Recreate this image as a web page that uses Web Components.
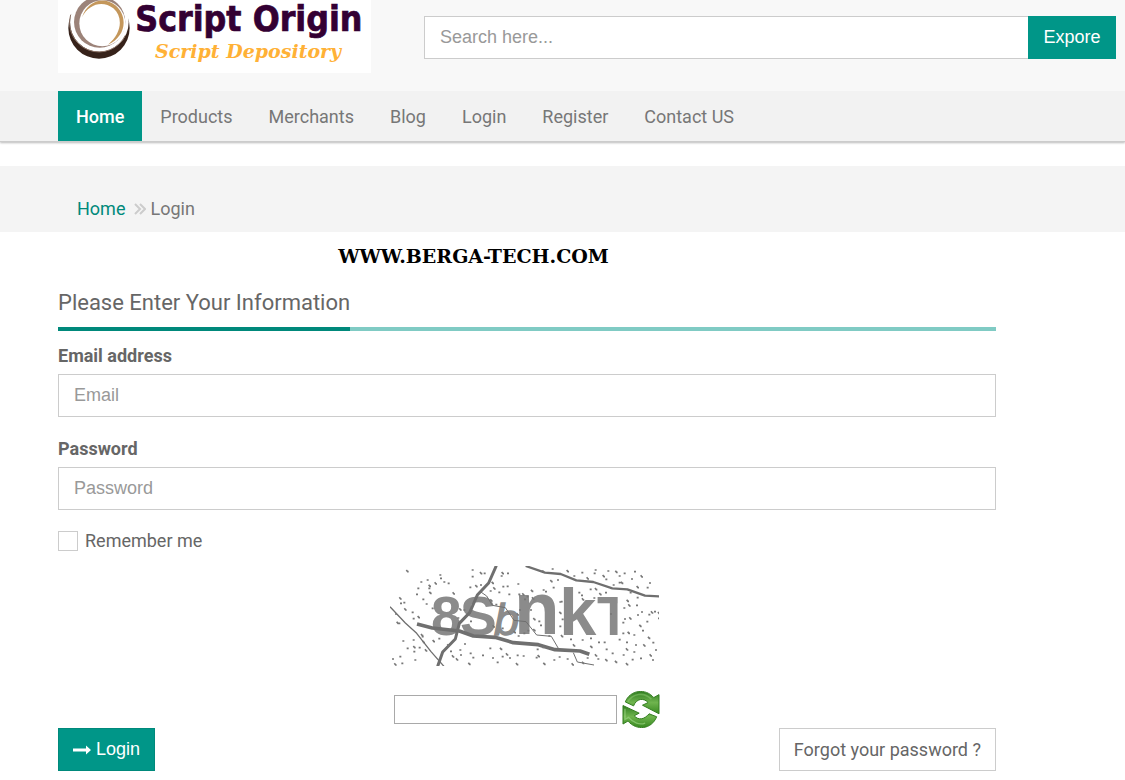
<!DOCTYPE html>
<html lang="en">
<head>
<meta charset="utf-8">
<meta name="viewport" content="width=device-width, initial-scale=1">
<title>Login - Script Origin</title>
<style>
  :root { --brand: #009688; --brand-dark: #00897b; --line: #ccc; --ui: "Liberation Sans", Arial, sans-serif; }
  body { margin: 0; background: #fff; color: #666; font: 18px/22px Roboto, sans-serif; }
</style>
</head>
<body>
<login-page></login-page>

<script>
const define = (name, html, setup) => {
  const template = document.createElement('template');
  template.innerHTML = '<style>*{box-sizing:border-box}</style>' + html;
  customElements.define(name, class extends HTMLElement {
    constructor() {
      super();
      this.attachShadow({ mode: 'open' }).append(template.content.cloneNode(true));
    }
    connectedCallback() { if (setup) setup(this, this.shadowRoot); }
  });
};

define('site-logo', `
<style>
  :host { display: block; width: 313px; height: 73px; background: #fff; }
  a, svg { display: block; }
</style>
<a href="#" aria-label="Script Origin home">
<svg width="313" height="73" viewBox="24 0 939 219">
  <circle cx="147" cy="84" r="92" fill="#36221a"/>
  <circle cx="148" cy="67" r="88" fill="#fff"/>
  <path d="M62 44 A88 88 0 0 0 226 106" fill="none" stroke="#8d7467" stroke-width="3"/>
  <circle cx="149" cy="66" r="77" fill="#9c8379"/>
  <circle cx="157" cy="70" r="69" fill="#fff"/>
  <path d="M96 52 C112 2 162 -12 196 16 C234 48 230 108 174 134 C216 98 220 52 190 25 C158 0 116 12 96 52Z" fill="#c4975b"/>
  <text x="256" y="93" font-family="DejaVu Sans Condensed, DejaVu Sans, sans-serif" font-stretch="condensed" font-weight="700" font-size="106" fill="#330033" stroke="#330033" stroke-width="2">Script Origin</text>
  <text x="315" y="173" font-family="DejaVu Serif, serif" font-style="italic" font-weight="700" font-size="57" fill="#ffb136">Script Depository</text>
</svg>
</a>`);

define('site-search', `
<style>
  :host { display: block; flex: 1; }
  form { display: flex; }
  input { flex: 1; min-width: 0; height: 43px; padding: 0 15px; border: 1px solid var(--line); border-right: 0; border-radius: 0; background: #fff; color: #555; font: 18px var(--ui); }
  input::placeholder { color: #999; }
  button { width: 88px; height: 43px; padding: 0; border: 0; background: var(--brand); color: #fff; font: 18px var(--ui); }
</style>
<form><input type="text" aria-label="Search" placeholder="Search here..."><button type="button">Expore</button></form>`);

define('site-header', `
<style>
  :host { display: flex; align-items: flex-start; height: 91px; padding: 0 9px 0 58px; gap: 53px; background: #f8f8f8; }
  site-search { margin-top: 16px; }
</style>
<site-logo></site-logo><site-search></site-search>`);

define('nav-link', `
<style>
  :host { display: block; }
  a { display: block; padding: 15px 18px 13px; color: #777; text-decoration: none; white-space: nowrap; }
  :host([active]) a { background: var(--brand); color: #fff; font-weight: 500; }
</style>
<a href="#"><slot></slot></a>`);

define('site-nav', `
<style>
  :host { display: block; background: #f2f2f2; box-shadow: 0 1px 0 #ccc, 0 2px 2px #bbb; }
  nav { display: flex; padding-left: 58px; height: 50px; }
</style>
<nav><slot></slot></nav>`);

define('bread-crumbs', `
<style>
  :host { display: block; margin-top: 25px; background: #f4f4f4; }
  nav { display: flex; align-items: center; padding: 32px 77px 12px; color: #777; }
  a { color: var(--brand-dark); text-decoration: none; }
  svg { margin: 0 4px 0 9px; }
</style>
<nav aria-label="Breadcrumb"><a href="#">Home</a>
<svg width="12" height="12" viewBox="0 0 12 12" fill="none" stroke="#ccc" stroke-width="2"><path d="M1 1l5 5-5 5M6 1l5 5-5 5"/></svg>
<span><slot></slot></span></nav>`);

define('section-title', `
<style>
  :host { display: block; border-bottom: 4px solid #80cbc4; }
  h1 { width: fit-content; margin: 0 0 -4px; padding-bottom: 8px; border-bottom: 4px solid var(--brand-dark); font-size: 22px; line-height: 32px; font-weight: 400; }
</style>
<h1><slot></slot></h1>`);

define('form-field', `
<style>
  :host { display: block; }
  label { display: block; margin-bottom: 7px; font-weight: 700; }
  input { display: block; width: 100%; height: 43px; padding: 0 15px; border: 1px solid var(--line); border-radius: 0; background: #fff; color: #555; font: 18px var(--ui); }
  input::placeholder { color: #999; }
</style>
<label for="control"><slot></slot></label><input id="control">`,
(host, root) => {
  const input = root.querySelector('input');
  input.type = host.getAttribute('type');
  input.placeholder = host.getAttribute('placeholder');
});

define('check-option', `
<style>
  :host { display: block; }
  label { display: flex; align-items: center; gap: 7px; }
  input { appearance: none; width: 20px; height: 20px; margin: 0; border: 1px solid var(--line); background: #fff; }
  input:checked { background: var(--brand); }
</style>
<label><input type="checkbox"><slot></slot></label>`);

define('captcha-box', `
<style>
  :host { display: flex; flex-direction: column; align-items: center; }
  .image { display: block; margin-right: 5px; }
  .entry { display: flex; align-items: center; gap: 5px; margin-top: 24px; }
  input { width: 223px; height: 29px; padding: 0 4px; border: 1px solid #a9a9a9; border-radius: 0; background: #fff; font: 18px var(--ui); }
  button { display: block; width: 38px; height: 38px; padding: 0; border: 0; background: none; }
  button svg { display: block; }
</style>
<svg class="image" width="269" height="100" viewBox="30 18 807 300">
  <clipPath id="edge"><path d="M30 18H713V318H30Z"/></clipPath>
  <text fill="#8b8b8b" font-family="Liberation Sans, Arial, sans-serif" font-weight="700" font-size="165" clip-path="url(#edge)"><tspan x="153" y="226">8</tspan><tspan x="240">S</tspan><tspan x="342" y="224" font-size="135" font-weight="400" font-style="italic" stroke="#8b8b8b" stroke-width="4">b</tspan><tspan x="402" y="222" font-size="224">n</tspan><tspan x="538" y="224" font-size="200">k</tspan><tspan x="651" y="224" font-size="165">T</tspan></text>
  <g fill="none" stroke="#6f6f6f" stroke-linejoin="round">
    <path stroke-width="9" d="M349 17L326 69 292 105 269 158 238 190 226 237 188 276 173 319"/>
    <path stroke-width="11" d="M111 192L157 204 238 213 280 228 345 232 400 248 475 254 525 269 600 273 628 283"/>
    <path stroke-width="7" d="M437 18L495 38 542 42 589 61 640 66 697 85 742 88 795 107 838 109"/>
    <path stroke-width="4" d="M30 140L76 189 110 220 153 275 192 319"/>
    <path stroke-width="3" d="M301 95L320 108 337 136 376 143 402 181 438 185 470 225 514 229 535 265M580 278L592 306 642 315"/>
  </g>
  <path id="specks" fill="none" stroke="#777" stroke-width="5"/>
</svg>
<div class="entry">
  <input type="text" aria-label="Captcha text">
  <button type="button" aria-label="Refresh captcha">
    <svg width="38" height="37" viewBox="725 32 113 112">
      <defs><linearGradient id="g" x2="0" y2="1"><stop stop-color="#2f7d20"/><stop offset=".5" stop-color="#6fb44e"/><stop offset="1" stop-color="#37891f"/></linearGradient></defs>
      <path d="M734 65C748 29 795 22 820 52L836 43V101L786 75 803 67C790 52 768 54 759 77Z" fill="url(#g)" stroke="#347d20" stroke-width="3" stroke-linejoin="round"/>
      <path d="M742 65C755 40 790 33 813 57" fill="none" stroke="#8fce74" stroke-width="5" opacity=".5"/>
      <path d="M829 110C813 149 768 153 742 123L727 132V76L776 99 761 107C774 122 792 118 806 101Z" fill="url(#g)" stroke="#347d20" stroke-width="3" stroke-linejoin="round"/>
      <path d="M733 86V118L744 112C758 129 778 136 794 129" fill="none" stroke="#a4da8c" stroke-width="4" opacity=".6"/>
    </svg>
  </button>
</div>`,
(host, root) => {
  const dots = [
    79,30,121,66,140,60,146,74,178,45,180,55,164,67,190,66,203,70,218,97,112,85,145,85,148,95,108,103,127,118,
    58,112,60,130,70,128,73,145,95,157,45,162,50,185,55,190,98,176,113,168,137,132,155,145,123,222,67,243,98,240,
    100,258,116,263,125,230,128,243,80,265,100,275,135,268,36,297,58,290,43,310,64,310,103,300,158,240,175,236,
    275,30,300,36,311,40,275,50,286,75,300,75,268,82,365,36,362,48,381,40,340,82,367,80,380,79,335,65,329,93,
    210,274,216,286,238,270,240,285,228,295,269,280,277,293,265,308,306,286,328,265,360,263,336,294,365,290,
    378,280,387,294,410,286,408,309,428,288,470,268,473,285,467,293,487,262,490,308,350,307,252,252,202,253,
    412,72,415,103,427,100,440,110,432,118,453,89,488,90,495,95,456,112,485,33,515,27,511,60,518,83,531,60,
    560,30,580,48,604,38,620,52,641,40,644,30,668,45,682,33,676,58,706,32,716,48,731,40,723,65,753,57,762,35,
    782,46,807,69,800,83,770,78,698,75,716,68,645,84,629,88,603,106,606,115,595,98,640,114,658,99,675,98,
    749,98,740,119,770,113,768,136,745,133,730,144,783,156,813,154,805,164,822,155,834,156,834,175,771,165,
    748,172,732,177,727,188,778,194,799,185,727,220,743,215,760,225,786,212,804,230,738,247,716,239,738,265,
    765,255,760,276,790,253,817,248,825,270,809,283,780,295,816,300,738,309,755,299,728,285,705,302,
    542,125,538,126,538,155,545,178,538,199,543,225,505,228,570,238,579,253,605,240,630,235,631,257,654,247,
    671,247,645,283,652,297,677,268,676,297,695,280,560,297,575,310,536,291,520,300,606,305,620,294,690,162,
    410,160,417,150,450,150,460,174,475,184,480,196,460,207,442,212,430,220,401,213,413,228,365,205,338,196,
    270,184,250,150,238,145,232,174,346,134,331,118,385,103,355,97
  ];
  let path = '';
  for (let i = 0; i < dots.length; i += 2) {
    path += 'M' + dots[i] + ' ' + dots[i + 1] + (i % 3 ? 'h6' : 'l4 5h3');
  }
  root.querySelector('#specks').setAttribute('d', path);
});

define('login-actions', `
<style>
  :host { display: flex; justify-content: space-between; }
  button, a { display: flex; align-items: center; height: 43px; padding: 0 14px; border: 1px solid var(--line); font-size: 18px; }
  button { gap: 5px; border-color: var(--brand-dark); background: var(--brand); color: #fff; font-family: var(--ui); }
  a { background: #fff; color: #666; text-decoration: none; }
</style>
<button type="button"><svg width="18" height="12" viewBox="0 0 18 12" fill="#fff"><path d="M0 4.5H13V1.5L18 6 13 10.5V7.5H0Z"/></svg>Login</button>
<a href="#">Forgot your password ?</a>`);

define('login-page', `
<style>
  :host { display: block; }
  .mark { margin: 0; padding: 12px 178px 0 0; text-align: center; color: #000; font: 700 19px/24px "DejaVu Serif", serif; }
  main { padding: 19px 129px 9px 58px; }
  form-field { margin-top: 14px; }
  form-field + form-field { margin-top: 21px; }
  check-option { margin-top: 20px; }
  captcha-box { margin-top: 14px; }
</style>
<site-header></site-header>
<site-nav>
  <nav-link active>Home</nav-link><nav-link>Products</nav-link><nav-link>Merchants</nav-link><nav-link>Blog</nav-link><nav-link>Login</nav-link><nav-link>Register</nav-link><nav-link>Contact US</nav-link>
</site-nav>
<bread-crumbs>Login</bread-crumbs>
<p class="mark">WWW.BERGA-TECH.COM</p>
<main>
  <section-title>Please Enter Your Information</section-title>
  <form-field type="email" placeholder="Email">Email address</form-field>
  <form-field type="password" placeholder="Password">Password</form-field>
  <check-option>Remember me</check-option>
  <captcha-box></captcha-box>
  <login-actions></login-actions>
</main>`);
</script>
</body>
</html>
